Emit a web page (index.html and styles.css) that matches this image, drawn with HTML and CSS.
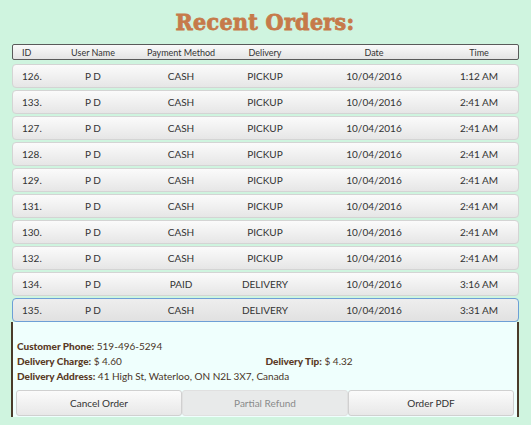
FILE: index.html
```html
<!DOCTYPE html>
<html>
<head>
<meta charset="utf-8">
<link rel="stylesheet" href="styles.css">
</head>
<body>
<div class="page">
  <h1 class="title">Recent Orders:</h1>
  <div class="table">
    <div class="row head">
      <span class="c-id">ID</span><span>User Name</span><span>Payment Method</span><span>Delivery</span><span>Date</span><span>Time</span>
    </div>
    <div class="row item"><span class="c-id">126.</span><span>P D</span><span>CASH</span><span>PICKUP</span><span>10/04/2016</span><span>1:12 AM</span></div>
    <div class="row item"><span class="c-id">133.</span><span>P D</span><span>CASH</span><span>PICKUP</span><span>10/04/2016</span><span>2:41 AM</span></div>
    <div class="row item"><span class="c-id">127.</span><span>P D</span><span>CASH</span><span>PICKUP</span><span>10/04/2016</span><span>2:41 AM</span></div>
    <div class="row item"><span class="c-id">128.</span><span>P D</span><span>CASH</span><span>PICKUP</span><span>10/04/2016</span><span>2:41 AM</span></div>
    <div class="row item"><span class="c-id">129.</span><span>P D</span><span>CASH</span><span>PICKUP</span><span>10/04/2016</span><span>2:41 AM</span></div>
    <div class="row item"><span class="c-id">131.</span><span>P D</span><span>CASH</span><span>PICKUP</span><span>10/04/2016</span><span>2:41 AM</span></div>
    <div class="row item"><span class="c-id">130.</span><span>P D</span><span>CASH</span><span>PICKUP</span><span>10/04/2016</span><span>2:41 AM</span></div>
    <div class="row item"><span class="c-id">132.</span><span>P D</span><span>CASH</span><span>PICKUP</span><span>10/04/2016</span><span>2:41 AM</span></div>
    <div class="row item"><span class="c-id">134.</span><span>P D</span><span>PAID</span><span>DELIVERY</span><span>10/04/2016</span><span>3:16 AM</span></div>
    <div class="row item selected"><span class="c-id">135.</span><span>P D</span><span>CASH</span><span>DELIVERY</span><span>10/04/2016</span><span>3:31 AM</span></div>
    <div class="detail">
      <div class="info">
        <div class="line"><b>Customer Phone:</b> 519-496-5294</div>
        <div class="line split"><div class="half"><b>Delivery Charge:</b> $ 4.60</div><div class="half"><b>Delivery Tip:</b> $ 4.32</div></div>
        <div class="line"><b>Delivery Address:</b> 41 High St, Waterloo, ON N2L 3X7, Canada</div>
      </div>
      <div class="buttons">
        <button class="btn">Cancel Order</button>
        <button class="btn disabled">Partial Refund</button>
        <button class="btn">Order PDF</button>
      </div>
    </div>
  </div>
</div>
</body>
</html>
```
FILE: styles.css
```css
html, body {
  margin: 0;
  padding: 0;
}
body {
  background: #cff4df;
  font-family: Lato, "Open Sans", sans-serif;
  color: #333;
  width: 531px;
  height: 425px;
  overflow: hidden;
}
.page {
  padding: 0 12px 0 11px;
}
.title {
  margin: 0;
  padding-top: 8px;
  height: 35px;
  box-sizing: border-box;
  text-align: center;
  font-family: "DejaVu Serif Condensed", "DejaVu Serif", serif;
  font-weight: bold;
  font-size: 23px;
  line-height: 27px;
  color: #c67a4a;
  -webkit-text-stroke: 0.8px #c67a4a;
  letter-spacing: 0.3px;
}
.table {
  display: flex;
  flex-direction: column;
  padding-top: 9px;
}
.row {
  display: grid;
  grid-template-columns: 40px 80px 96px 72px 146px 64px 1fr;
  align-items: center;
  margin-left: 1px;
  box-sizing: border-box;
}
.row span {
  text-align: center;
  white-space: nowrap;
}
.row span.c-id {
  text-align: left;
  padding-left: 9px;
}
.head {
  height: 16px;
  border: 1px solid #5a5a5a;
  border-radius: 2px;
  background: linear-gradient(#fafafa, #e4e4e4);
  font-size: 9px;
  margin-bottom: 4px;
}
.item {
  height: 24px;
  border: 1px solid #d4d4d4;
  border-radius: 4px;
  background: linear-gradient(#fbfbfb, #e6e6e6);
  font-size: 10px;
  margin-bottom: 2px;
}
.item.selected {
  border-color: #6d9fd6;
  background: linear-gradient(#eeeeee, #e1e1e1);
  margin-bottom: 0;
}
.detail {
  background: #effffd;
  border-left: 2px solid #4a3b2a;
  border-right: 2px solid #4a3b2a;
  height: 95px;
  box-sizing: border-box;
  display: flex;
  flex-direction: column;
  justify-content: flex-end;
  padding: 0 3px 1px 3px;
}
.info {
  padding: 0 0 6px 1px;
  font-size: 10px;
  color: #4a3528;
}
.info b {
  font-weight: 900;
  color: #5a3a26;
}
.line {
  height: 15px;
  line-height: 15px;
}
.split {
  display: flex;
}
.half {
  width: 249px;
}
.buttons {
  display: flex;
}
.btn {
  flex: 1;
  height: 26px;
  margin: 0;
  border: 1px solid #d0d0d0;
  border-radius: 3px;
  background: linear-gradient(#fbfbfb, #e8e8e8);
  font-family: Lato, "Open Sans", sans-serif;
  font-size: 10px;
  color: #333;
  padding: 0;
}
.btn.disabled {
  background: #e8eaea;
  color: #8a8a8a;
  border-color: #e0e0e0;
}
```
